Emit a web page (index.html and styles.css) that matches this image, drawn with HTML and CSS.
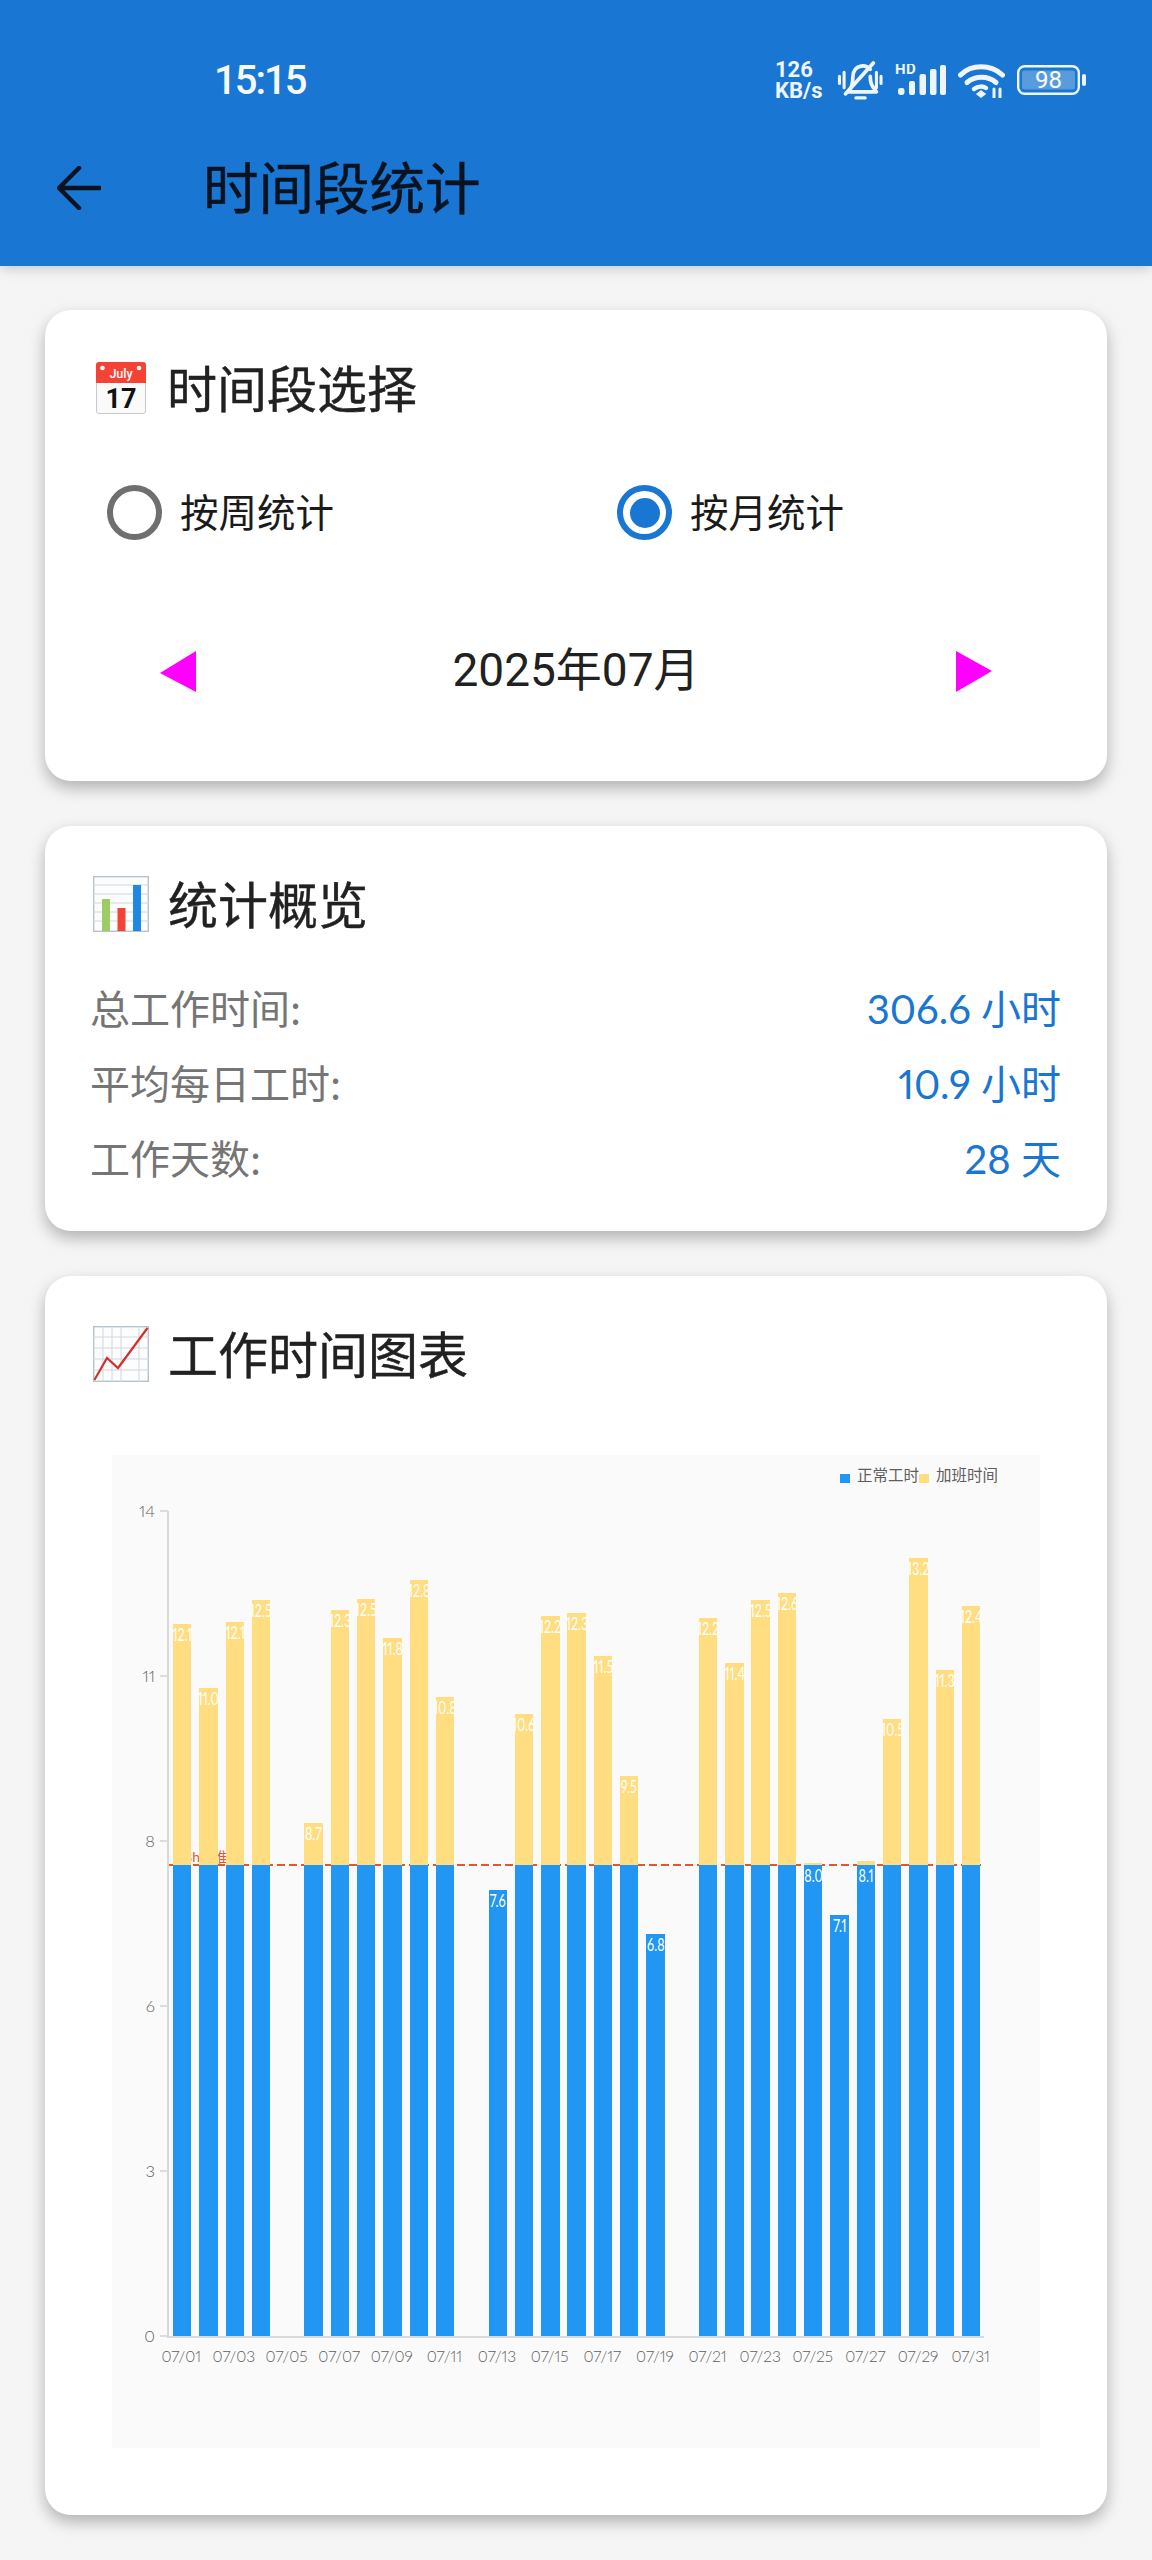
FILE: index.html
```html
<!DOCTYPE html>
<html lang="zh-CN">
<head>
<meta charset="utf-8">
<title>时间段统计</title>
<link rel="stylesheet" href="styles.css">
</head>
<body>
<header class="appbar">
  <div class="status">
    <span class="clock">15:15</span>
    <div class="status-icons">
      <div class="netspeed"><span>126</span><span>KB/s</span></div>
      <svg class="i-bell" viewBox="0 0 44 38" fill="none" stroke="#eef5fc" stroke-linecap="round" stroke-linejoin="round">
        <path d="M11 29c3-3 4-7 4-13 0-6 3-10 8-11 4-1 7 1 9 3" stroke-width="3.600"/>
        <path d="M32 15c0 6 1 9 4 12l2 3H11" stroke-width="3.600"/>
        <path d="M8 32L35 2" stroke-width="3.600"/>
        <path d="M18 36h9" stroke-width="3.200"/>
        <path d="M2 15v7M6.500 11v15M38 11v15M42.500 15v7" stroke-width="3"/>
      </svg>
      <svg class="i-signal" viewBox="0 0 51 33">
        <text class="hd" x="0" y="10">HD</text>
        <rect x="3" y="24" width="6.500" height="7" rx="2.400"/>
        <rect x="14" y="17" width="6" height="14" rx="2"/>
        <rect x="24.500" y="10" width="6.500" height="21" rx="2"/>
        <rect x="35" y="5" width="6.500" height="26" rx="2"/>
        <rect x="45" y="1" width="6" height="30" rx="2"/>
      </svg>
      <svg class="i-wifi" viewBox="0 0 47 35" fill="none" stroke="#eef5fc" stroke-linecap="round">
        <path d="M2.500 12C13 1 33 1 44.500 12" stroke-width="5"/>
        <path d="M9 19.500c8-7 21-7 29 0" stroke-width="5"/>
        <path d="M16 26c4-3 9-3 12-1" stroke-width="4.500"/>
        <path d="M19 31l4-3 4 3-4 3z" fill="#eef5fc" stroke-width="1.500"/>
        <path d="M36 26v9M42 26v9" stroke-width="3"/>
      </svg>
      <svg class="i-batt" viewBox="0 0 70 30">
        <rect class="batt-shell" x="1.200" y="1.200" width="60.600" height="27.600" rx="6.500"/>
        <rect class="batt-fill" x="5" y="5.500" width="53" height="19" rx="2.500"/>
        <rect class="batt-cap" x="65" y="9" width="4" height="12" rx="2"/>
        <text class="batt-num" x="31.500" y="23">98</text>
      </svg>
    </div>
  </div>
  <div class="toolbar">
    <svg class="back" viewBox="0 0 44 44" fill="none" stroke="#08131f" stroke-width="4.500" stroke-linecap="round" stroke-linejoin="round"><path d="M22 2L2 22l20 20M3 22h40"/></svg>
    <h1 class="page-title">时间段统计</h1>
  </div>
</header>

<main class="page">
  <section class="card card-period">
    <h2 class="card-title">
      <svg class="emoji emoji-cal" viewBox="0 0 50 52">
        <rect x=".5" y=".5" width="49" height="51" rx="2.500" fill="#fafafa" stroke="#c9c9c9"/>
        <path d="M0 3a3 3 0 0 1 3-3h44a3 3 0 0 1 3 3v18H0z" fill="#f44336"/>
        <circle cx="6.500" cy="6" r="2.300" fill="#fff"/><circle cx="43" cy="6" r="2.300" fill="#fff"/>
        <text class="cal-month" x="25" y="15.500">July</text>
        <text class="cal-day" x="25" y="46">17</text>
      </svg>
      <span class="title-text">时间段选择</span>
    </h2>
    <div class="radio-group">
      <label class="radio"><span class="radio-dot"></span><span class="radio-text">按周统计</span></label>
      <label class="radio is-on"><span class="radio-dot"></span><span class="radio-text">按月统计</span></label>
    </div>
    <div class="date-nav">
      <svg class="nav-arrow" viewBox="0 0 36 41"><polygon points="36,0 36,41 0,22"/></svg>
      <span class="date-text">2025年07月</span>
      <svg class="nav-arrow" viewBox="0 0 36 41"><polygon points="0,0 0,41 36,20"/></svg>
    </div>
  </section>

  <section class="card card-stats">
    <h2 class="card-title">
      <svg class="emoji" viewBox="0 0 56 56">
        <rect x=".7" y=".7" width="54.600" height="54.600" fill="#fdfdfd" stroke="#b4c4cc" stroke-width="1.400"/>
        <path d="M0 9h56M0 18h56M0 27h56M0 36h56M0 45h56" stroke="#cfd8dc" stroke-width="1"/>
        <rect x="9" y="23" width="8" height="32" fill="#9ccc65"/>
        <rect x="24.500" y="32" width="8" height="23" fill="#f44336"/>
        <rect x="40" y="9" width="8" height="46" fill="#1e88e5"/>
      </svg>
      <span class="title-text">统计概览</span>
    </h2>
    <dl class="stat-list">
      <div class="stat-row"><dt>总工作时间:</dt><dd>306.6 小时</dd></div>
      <div class="stat-row"><dt>平均每日工时:</dt><dd>10.9 小时</dd></div>
      <div class="stat-row"><dt>工作天数:</dt><dd>28 天</dd></div>
    </dl>
  </section>

  <section class="card card-chart">
    <h2 class="card-title">
      <svg class="emoji" viewBox="0 0 56 56">
        <rect x=".7" y=".7" width="54.600" height="54.600" fill="#fdfdfd" stroke="#b4c4cc" stroke-width="1.400"/>
        <path d="M0 11h56M0 22h56M0 33h56M0 44h56M10 0v56M19 0v56M28 0v56M46 0v56" stroke="#cfd8dc" stroke-width="1"/>
        <polyline points="1.400,54 14,32 25,42 54.500,2" fill="none" stroke="#d32f2f" stroke-width="2.200"/>
      </svg>
      <span class="title-text">工作时间图表</span>
    </h2>
    <figure class="chart">
      <figcaption class="legend">
        <span class="legend-item"><i class="swatch swatch-normal"></i>正常工时</span>
        <span class="legend-item"><i class="swatch swatch-extra"></i>加班时间</span>
      </figcaption>
      <div class="chart-body">
        <div class="y-axis">
          <span class="y-tick">14</span><span class="y-tick">11</span><span class="y-tick">8</span><span class="y-tick">6</span><span class="y-tick">3</span><span class="y-tick">0</span>
        </div>
        <div class="plot-wrap">
          <div class="plot">
            <div class="ref-line"><span class="ref-label">8h标准</span></div>
            <div class="day"><div class="seg extra" style="height:29.14%"><span class="val">12.1</span></div><div class="seg normal" style="height:57.14%"></div></div>
            <div class="day"><div class="seg extra" style="height:21.43%"><span class="val">11.0</span></div><div class="seg normal" style="height:57.14%"></div></div>
            <div class="day"><div class="seg extra" style="height:29.43%"><span class="val">12.1</span></div><div class="seg normal" style="height:57.14%"></div></div>
            <div class="day"><div class="seg extra" style="height:32.07%"><span class="val">12.5</span></div><div class="seg normal" style="height:57.14%"></div></div>
            <div class="day"></div>
            <div class="day"><div class="seg extra" style="height:5.07%"><span class="val">8.7</span></div><div class="seg normal" style="height:57.14%"></div></div>
            <div class="day"><div class="seg extra" style="height:30.86%"><span class="val">12.3</span></div><div class="seg normal" style="height:57.14%"></div></div>
            <div class="day"><div class="seg extra" style="height:32.14%"><span class="val">12.5</span></div><div class="seg normal" style="height:57.14%"></div></div>
            <div class="day"><div class="seg extra" style="height:27.43%"><span class="val">11.8</span></div><div class="seg normal" style="height:57.14%"></div></div>
            <div class="day"><div class="seg extra" style="height:34.5%"><span class="val">12.8</span></div><div class="seg normal" style="height:57.14%"></div></div>
            <div class="day"><div class="seg extra" style="height:20.29%"><span class="val">10.8</span></div><div class="seg normal" style="height:57.14%"></div></div>
            <div class="day"></div>
            <div class="day"><div class="seg normal" style="height:54.07%"><span class="val">7.6</span></div></div>
            <div class="day"><div class="seg extra" style="height:18.21%"><span class="val">10.6</span></div><div class="seg normal" style="height:57.14%"></div></div>
            <div class="day"><div class="seg extra" style="height:30.14%"><span class="val">12.2</span></div><div class="seg normal" style="height:57.14%"></div></div>
            <div class="day"><div class="seg extra" style="height:30.5%"><span class="val">12.3</span></div><div class="seg normal" style="height:57.14%"></div></div>
            <div class="day"><div class="seg extra" style="height:25.29%"><span class="val">11.5</span></div><div class="seg normal" style="height:57.14%"></div></div>
            <div class="day"><div class="seg extra" style="height:10.71%"><span class="val">9.5</span></div><div class="seg normal" style="height:57.14%"></div></div>
            <div class="day"><div class="seg normal" style="height:48.71%"><span class="val">6.8</span></div></div>
            <div class="day"></div>
            <div class="day"><div class="seg extra" style="height:29.86%"><span class="val">12.2</span></div><div class="seg normal" style="height:57.14%"></div></div>
            <div class="day"><div class="seg extra" style="height:24.43%"><span class="val">11.4</span></div><div class="seg normal" style="height:57.14%"></div></div>
            <div class="day"><div class="seg extra" style="height:32.07%"><span class="val">12.5</span></div><div class="seg normal" style="height:57.14%"></div></div>
            <div class="day"><div class="seg extra" style="height:32.93%"><span class="val">12.6</span></div><div class="seg normal" style="height:57.14%"></div></div>
            <div class="day"><div class="seg extra" style="height:.17%"></div><div class="seg normal" style="height:57.14%"><span class="val">8.0</span></div></div>
            <div class="day"><div class="seg normal" style="height:51%"><span class="val">7.1</span></div></div>
            <div class="day"><div class="seg extra" style="height:.4%"></div><div class="seg normal" style="height:57.14%"><span class="val">8.1</span></div></div>
            <div class="day"><div class="seg extra" style="height:17.64%"><span class="val">10.5</span></div><div class="seg normal" style="height:57.14%"></div></div>
            <div class="day"><div class="seg extra" style="height:37.14%"><span class="val">13.2</span></div><div class="seg normal" style="height:57.14%"></div></div>
            <div class="day"><div class="seg extra" style="height:23.57%"><span class="val">11.3</span></div><div class="seg normal" style="height:57.14%"></div></div>
            <div class="day"><div class="seg extra" style="height:31.36%"><span class="val">12.4</span></div><div class="seg normal" style="height:57.14%"></div></div>
          </div>
          <div class="x-axis">
            <span>07/01</span><span>07/03</span><span>07/05</span><span>07/07</span><span>07/09</span><span>07/11</span><span>07/13</span><span>07/15</span><span>07/17</span><span>07/19</span><span>07/21</span><span>07/23</span><span>07/25</span><span>07/27</span><span>07/29</span><span>07/31</span>
          </div>
        </div>
      </div>
    </figure>
  </section>
</main>
</body>
</html>
```

FILE: styles.css
```css
* { box-sizing: border-box; }
html, body { margin: 0; padding: 0; }
body {
  width: 1152px;
  min-height: 2560px;
  background: #f5f5f5;
  font-family: "Noto Sans CJK SC", Roboto, sans-serif;
  color: #212121;
  overflow: hidden;
}

/* App bar */
.appbar {
  position: relative;
  z-index: 2;
  height: 266px;
  background: #1976d2;
  box-shadow: 0 3px 12px rgba(0, 0, 0, .18);
  padding-top: 60px;
}
.status {
  display: flex;
  align-items: center;
  justify-content: space-between;
  height: 40px;
  padding: 0 65px 0 214px;
  color: #fff;
}
.clock {
  font-family: Roboto, sans-serif;
  font-size: 40px;
  font-weight: 500;
  letter-spacing: -2px;
  color: #f4f9fe;
}
.status-icons { display: flex; align-items: center; gap: 12px; }
.netspeed {
  display: flex;
  flex-direction: column;
  width: 50px;
  font-family: Roboto, sans-serif;
  font-weight: 700;
  font-size: 22px;
  line-height: 21px;
  white-space: nowrap;
  color: #eef5fc;
}
.i-bell { width: 46px; height: 39px; }
.i-signal { width: 51px; height: 33px; fill: #eef5fc; }
.hd { font-family: Roboto, sans-serif; font-weight: 700; font-size: 15px; letter-spacing: .3px; }
.i-wifi { width: 47px; height: 35px; }
.i-batt { width: 70px; height: 30px; }
.batt-shell { fill: none; stroke: #eef5fc; stroke-width: 2.400; }
.batt-fill { fill: rgba(255, 255, 255, .28); }
.batt-cap { fill: #eef5fc; }
.batt-num { font-family: Roboto, sans-serif; font-size: 24px; fill: #fff; text-anchor: middle; }

.toolbar {
  display: flex;
  align-items: center;
  gap: 102px;
  height: 56px;
  margin-top: 60px;
  padding-left: 57px;
}
.back { width: 44px; height: 44px; flex: none; }
.page-title {
  margin: 0 0 6px;
  font-size: 55.500px;
  font-weight: 400;
  line-height: 56px;
  -webkit-text-stroke: .5px #08131f;
  color: #08131f;
}

/* Cards */
.page {
  display: flex;
  flex-direction: column;
  gap: 45px;
  padding: 44px 45px 0;
}
.card {
  background: #fff;
  border-radius: 26px;
  box-shadow: 0 7px 16px rgba(0, 0, 0, .28);
  padding: 46px 46px 0;
}
.card-period { padding-bottom: 80px; }
.card-stats { padding-bottom: 37px; }
.card-chart { padding-bottom: 67px; }
.card-title {
  display: flex;
  align-items: center;
  gap: 19px;
  height: 64px;
  margin: 0;
  font-size: 50px;
  font-weight: 400;
  line-height: 64px;
  -webkit-text-stroke: .4px #212121;
  color: #212121;
}
.title-text { margin-bottom: 4px; }
.emoji { width: 56px; height: 56px; margin-left: 2px; flex: none; -webkit-text-stroke: 0; }
.emoji-cal { width: 50px; height: 52px; margin: 0 2px 0 5px; }
.cal-month { font-family: Roboto, sans-serif; font-size: 12.500px; font-weight: 500; fill: #fff; text-anchor: middle; }
.cal-day { font-family: Roboto, sans-serif; font-size: 27px; font-weight: 700; fill: #111; text-anchor: middle; }

/* Radios */
.radio-group {
  display: grid;
  grid-template-columns: 510px 1fr;
  margin-top: 65px;
}
.radio {
  display: flex;
  align-items: center;
  gap: 18px;
  height: 55px;
  padding-left: 16px;
  font-size: 38.500px;
  color: #1a1a1a;
}
.radio-text { margin-bottom: 6px; }
.radio-dot {
  position: relative;
  width: 55px;
  height: 55px;
  border: 6.500px solid #6f6f6f;
  border-radius: 50%;
}
.is-on .radio-dot { border-color: #1976d2; }
.is-on .radio-dot::after {
  content: "";
  position: absolute;
  inset: 6.500px;
  border-radius: 50%;
  background: #1976d2;
}

/* Date navigator */
.date-nav {
  display: flex;
  align-items: center;
  justify-content: space-between;
  height: 60px;
  margin-top: 101px;
  padding: 0 69px;
}
.nav-arrow { width: 36px; height: 41px; fill: #ff00ff; }
.date-text {
  margin-bottom: 10px;
  font-family: Roboto, "Noto Sans CJK SC", sans-serif;
  font-size: 46px;
  color: #212121;
}

/* Stats */
.stat-list { margin: 33px 0 0; }
.stat-row {
  display: flex;
  align-items: center;
  justify-content: space-between;
  height: 75px;
}
.stat-row dt { font-size: 40px; color: #757575; margin-left: -1px; }
.stat-row dd {
  margin: 0;
  font-family: Lato, "Noto Sans CJK SC", sans-serif;
  font-size: 40px;
  font-variant-numeric: proportional-nums;
  color: #1976d2;
}

/* Chart */
.chart {
  height: 993px;
  margin: 69px 21px 0;
  background: #fafafa;
  font-family: Lato, "Noto Sans CJK SC", sans-serif;
  font-variant-numeric: proportional-nums;
  color: #5e5e5e;
}
.legend {
  display: flex;
  justify-content: flex-end;
  height: 56px;
  padding: 9px 42px 0 0;
  font-size: 15.500px;
  line-height: 22px;
}
.legend-item { display: flex; align-items: center; height: 22px; }
.swatch { width: 10px; height: 9px; margin-right: 7px; position: relative; top: 3px; }
.swatch-normal { background: #2196f3; }
.swatch-extra { background: #ffdd80; }
.chart-body { display: flex; }
.y-axis {
  display: flex;
  flex-direction: column;
  justify-content: space-between;
  width: 56px;
  height: 825px;
}
.y-tick {
  display: flex;
  align-items: center;
  justify-content: flex-end;
  height: 0;
  font-size: 16.500px;
  font-weight: 300;
  gap: 5px;
}
.y-tick::after {
  content: "";
  width: 8px;
  height: 1.500px;
  background: #ddd;
}
.plot-wrap { width: 816px; }
.plot {
  position: relative;
  display: flex;
  height: 825px;
  border-left: 2px solid #d8d8d8;
  border-bottom: 2px solid #d8d8d8;
  box-sizing: content-box;
  margin-left: -1px;
}
.ref-line {
  position: absolute;
  left: 0;
  right: 0;
  top: 353px;
  height: 2px;
  background: repeating-linear-gradient(90deg, #e8552d 0 8px, transparent 8px 12px);
}
.ref-label {
  position: absolute;
  left: 15px;
  bottom: 2px;
  font-family: Lato, "Noto Sans CJK SC", sans-serif;
  font-size: 14px;
  line-height: 15px;
  white-space: nowrap;
  color: #e8552d;
}
.day {
  position: relative;
  flex: 1;
  display: flex;
  flex-direction: column;
  justify-content: flex-end;
  align-items: center;
  height: 825px;
}
.seg {
  display: flex;
  justify-content: center;
  width: 18.400px;
  overflow: hidden;
}
.seg.normal { background: #2196f3; }
.seg.extra { background: #ffdd80; }
.val {
  flex: none;
  margin-top: 3px;
  font-size: 17px;
  font-weight: 400;
  line-height: 16px;
  transform: scaleX(.74);
  color: #fff;
}
.x-axis {
  display: flex;
  width: 842px;
  margin-left: -13px;
  padding-top: 8px;
}
.x-axis span {
  flex: 1;
  min-width: 0;
  text-align: center;
  font-size: 15.500px;
  font-weight: 300;
  line-height: 20px;
  white-space: nowrap;
}
```
